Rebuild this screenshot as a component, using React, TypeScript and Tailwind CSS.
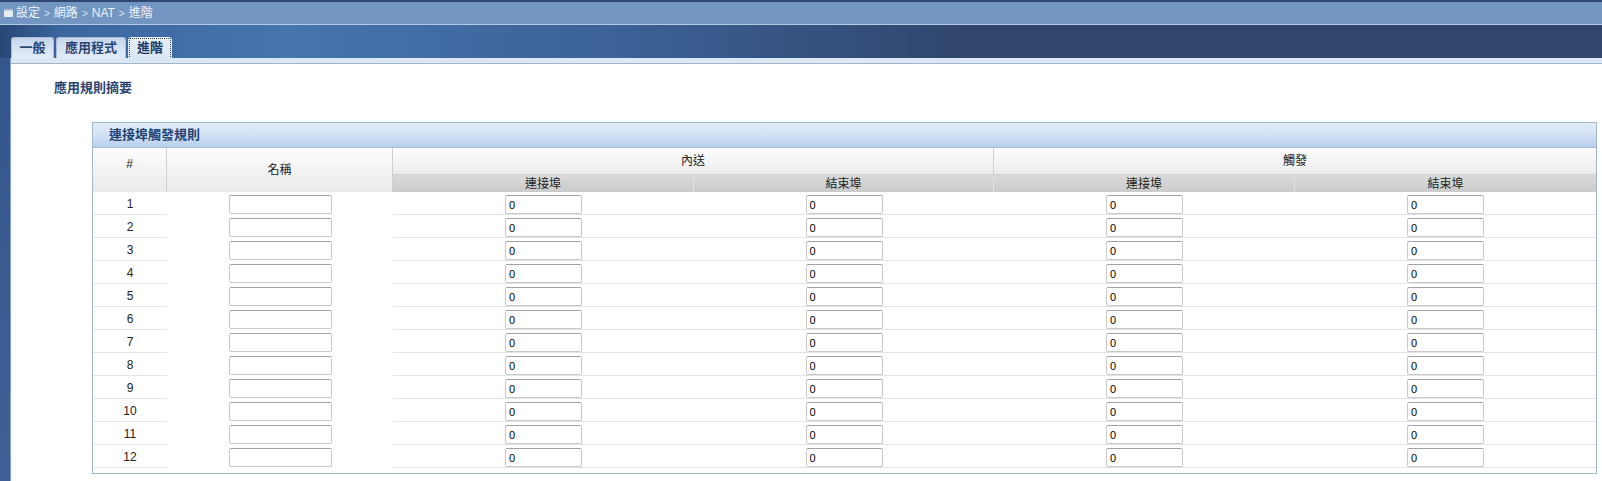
import React from 'react';

const ROWS = Array.from({ length: 12 }, (_, i) => i + 1);
const COLS = 'grid grid-cols-[74px_226px_301px_300px_301px_301px]';

function PortInput() {
  return (
    <input
      type="text"
      defaultValue="0"
      readOnly
      className="w-[77px] h-[19px] mt-[3px] px-[3px] text-[11px] text-black bg-white border border-[#c9c9c9] border-t-[#a3a3a3] rounded-[2px] outline-none"
    />
  );
}

export default function App() {
  return (
    <div className="w-[1602px] h-[481px] overflow-hidden flex flex-col bg-white font-['Liberation_Sans','Noto_Sans_CJK_TC',sans-serif] text-[12px] text-[#222]">
      {/* top line + breadcrumb */}
      <div className="h-[2px] bg-[#2f4670]" />
      <div className="h-[23px] shrink-0 bg-[#7295c1] border-b border-[#b5cae3] flex items-center pl-[4px] text-[#eef3fa]">
        <div className="w-[9px] h-[8px] bg-[#e8edf4] border-t-2 border-[#b9c3d2] rounded-[1px] mr-[3px]" />
        <span>設定</span>
        <span className="text-[10px] mx-[4px] text-[#dbe5f2]">&gt;</span>
        <span>網路</span>
        <span className="text-[10px] mx-[4px] text-[#dbe5f2]">&gt;</span>
        <span>NAT</span>
        <span className="text-[10px] mx-[4px] text-[#dbe5f2]">&gt;</span>
        <span>進階</span>
      </div>

      {/* tab band */}
      <div className="h-[33px] shrink-0 bg-[linear-gradient(90deg,#294876_0%,#3b67a1_4%,#4674ad_18%,#3c6298_38%,#30466d_60%,#30466d_100%)] flex items-end pl-[11px] gap-[2px]">
        <div className="w-[43px] h-[21px] flex items-center justify-center rounded-t-[3px] border border-b-0 border-[#a9bdd6] bg-[linear-gradient(180deg,#c5d6ec,#e4edf8)] text-[13px] font-bold text-[#2c4672]">
          一般
        </div>
        <div className="w-[70px] h-[21px] flex items-center justify-center rounded-t-[3px] border border-b-0 border-[#a9bdd6] bg-[linear-gradient(180deg,#c5d6ec,#e4edf8)] text-[13px] font-bold text-[#2c4672]">
          應用程式
        </div>
        <div className="w-[44px] h-[21px] flex items-center justify-center rounded-t-[3px] bg-[linear-gradient(180deg,#e6eef9,#dce7f6)] p-[1px]">
          <div className="w-full h-full flex items-center justify-center border border-dotted border-[#444] border-b-0 text-[13px] font-bold text-[#1f3a66]">
            進階
          </div>
        </div>
      </div>

      <div className="flex flex-1 min-h-0">
        <div className="w-[10px] bg-[linear-gradient(180deg,#35568c,#3f5f95)]" />
        <div className="w-px bg-[#7d9ed5]" />
        <div className="flex-1 flex flex-col bg-white">
          <div className="h-[6px] shrink-0 bg-[#dce7f6] border-b border-[#a1b5c8]" />

          <div className="pl-[43px] pt-[16px] h-[16px] box-content leading-[16px] text-[13px] font-bold text-[#2b4571]">
            應用規則摘要
          </div>

          {/* panel */}
          <div className="ml-[81px] mt-[26px] w-[1505px] border border-[#a0b9cb] pb-[5px]">
            <div className="h-[25px] flex items-center pl-[16px] border-b border-[#a5bedc] bg-[linear-gradient(180deg,#e4edf8,#cfdff3_55%,#b8cfed)] text-[13px] font-bold text-[#234274]">
              連接埠觸發規則
            </div>

            {/* table header */}
            <div className={`${COLS} grid-rows-[27px_17px]`}>
              <div className="row-span-2 flex justify-center pt-[7px] bg-[linear-gradient(180deg,#fdfdfd,#e9e9e9)] border-r border-[#d0d0d0]">
                #
              </div>
              <div className="row-span-2 flex items-center justify-center bg-[linear-gradient(180deg,#fdfdfd,#e9e9e9)] border-r border-[#d0d0d0]">
                名稱
              </div>
              <div className="col-span-2 flex items-center justify-center bg-[linear-gradient(180deg,#fdfdfd,#ececec)] border-r border-b border-[#d0d0d0]">
                內送
              </div>
              <div className="col-span-2 flex items-center justify-center bg-[linear-gradient(180deg,#fdfdfd,#ececec)] border-b border-[#d0d0d0]">
                觸發
              </div>
              <div className="flex items-center justify-center bg-[linear-gradient(180deg,#dadada,#cbcbcb)] border-r border-[#e2e2e2]">
                連接埠
              </div>
              <div className="flex items-center justify-center bg-[linear-gradient(180deg,#dadada,#cbcbcb)] border-r border-[#e2e2e2]">
                結束埠
              </div>
              <div className="flex items-center justify-center bg-[linear-gradient(180deg,#dadada,#cbcbcb)] border-r border-[#e2e2e2]">
                連接埠
              </div>
              <div className="flex items-center justify-center bg-[linear-gradient(180deg,#dadada,#cbcbcb)]">
                結束埠
              </div>
            </div>

            {/* rows */}
            {ROWS.map((n) => (
              <div key={n} className={`${COLS} h-[23px]`}>
                <div className="flex items-center justify-center pt-[2px] border-b border-[#e4e4e4]">{n}</div>
                <div className="flex justify-center">
                  <input
                    type="text"
                    readOnly
                    className="w-[103px] h-[19px] mt-[3px] bg-white border border-[#c9c9c9] border-t-[#a3a3a3] rounded-[2px] outline-none"
                  />
                </div>
                <div className="flex justify-center border-b border-[#e4e4e4]">
                  <PortInput />
                </div>
                <div className="flex justify-center border-b border-[#e4e4e4]">
                  <PortInput />
                </div>
                <div className="flex justify-center border-b border-[#e4e4e4]">
                  <PortInput />
                </div>
                <div className="flex justify-center border-b border-[#e4e4e4]">
                  <PortInput />
                </div>
              </div>
            ))}
          </div>
        </div>
      </div>
    </div>
  );
}
